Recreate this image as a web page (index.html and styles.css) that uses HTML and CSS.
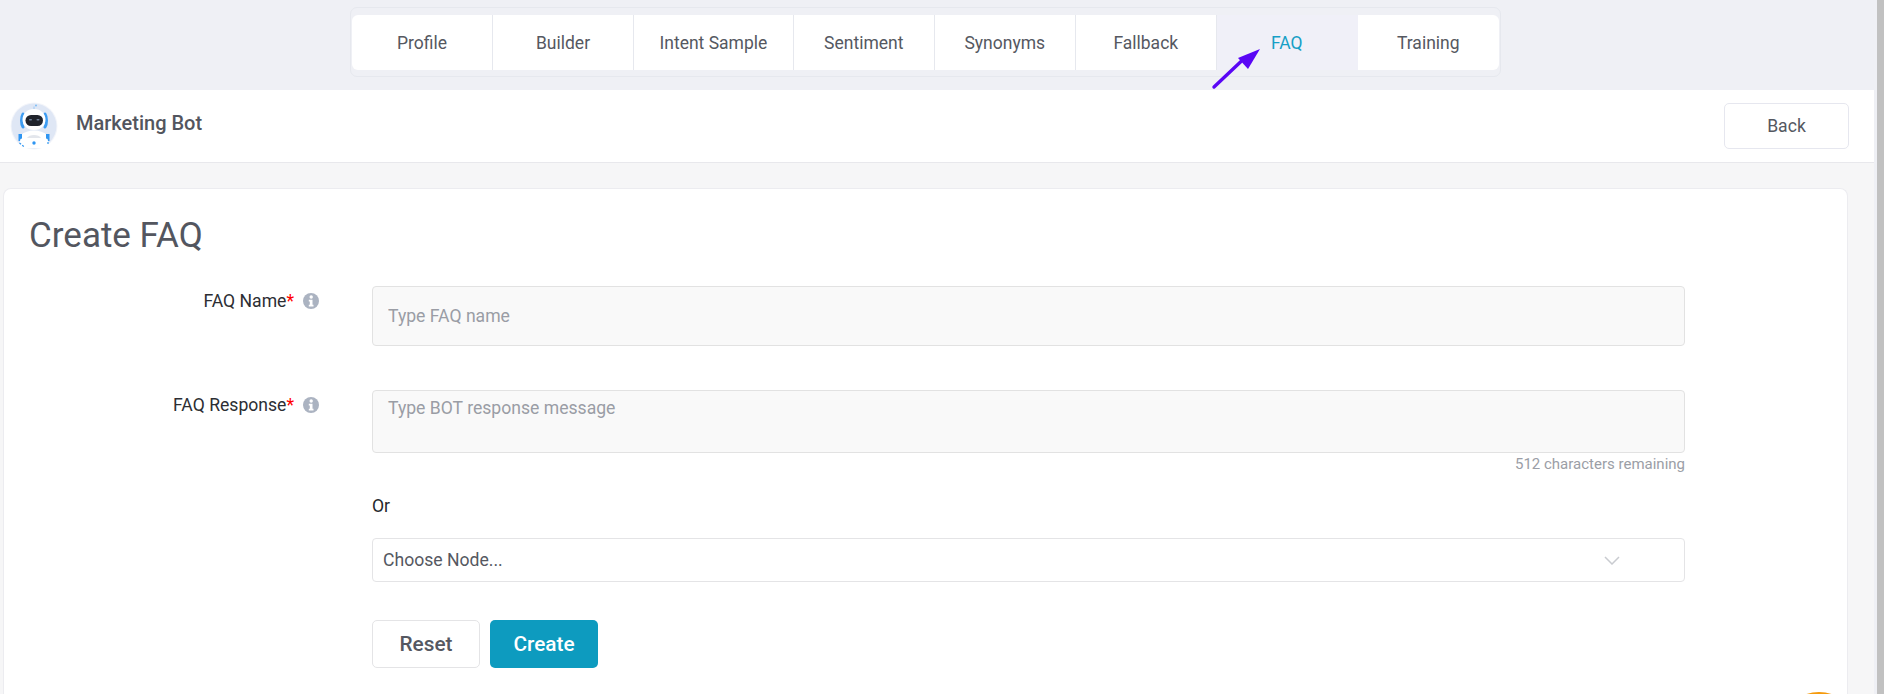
FILE: index.html
```html
<!DOCTYPE html>
<html lang="en">
<head>
<meta charset="utf-8">
<title>Create FAQ</title>
<link rel="stylesheet" href="styles.css">
</head>
<body>
<div class="app">
  <div class="topbar">
    <nav class="tabs">
      <a class="tab">Profile</a>
      <a class="tab">Builder</a>
      <a class="tab">Intent Sample</a>
      <a class="tab">Sentiment</a>
      <a class="tab">Synonyms</a>
      <a class="tab">Fallback</a>
      <a class="tab tab-active">FAQ</a>
      <a class="tab tab-last">Training</a>
    </nav>
  </div>
  <header class="bot-header">
    <div class="bot-id">
      <svg class="bot-logo" viewBox="0 0 48 48" aria-hidden="true">
        <circle cx="24" cy="24" r="23.500" fill="#f3f5fa"/>
        <circle cx="24" cy="24" r="22.500" fill="#dfe7f5"/>
        <circle cx="26" cy="3.500" r="1" fill="#7fbdf5"/>
        <path d="M24 4.500v4" stroke="#9cc9f5" stroke-width="1"/>
        <path d="M13 12c-2 3-2 10 0 13M35 12c2 3 2 10 0 13" fill="none" stroke="#3d9cf2" stroke-width="3" stroke-linecap="round"/>
        <path d="M24 7c7 0 11.500 5 11.500 10.500S31 28 24 28s-11.500-5-11.500-10.500S17 7 24 7z" fill="#fff"/>
        <rect x="15.500" y="13" width="17.500" height="11" rx="5.500" fill="#20232c"/>
        <rect x="19" y="17" width="3" height="1.500" rx=".7" fill="#6d7d94"/>
        <rect x="26.500" y="17" width="3" height="1.500" rx=".7" fill="#6d7d94"/>
        <path d="M11 33c3-3 8-4.500 13-4.500S34 30 37 33v8H11z" fill="#fff"/>
        <path d="M8.500 32h3.500v7H8.500zM36 32h3.500v7H36z" fill="#2e95f2"/>
        <path d="M17 36c2-4 12-4 14 0z" fill="#e3e6ec"/>
        <rect x="10" y="36.500" width="28" height="9.500" rx="2" fill="#fff"/>
        <circle cx="24" cy="41" r="1.700" fill="#2e95f2"/>
        <path d="M9.500 41l5 4" stroke="#2e95f2" stroke-width="1.200" stroke-dasharray="2 1.500"/>
        <circle cx="38" cy="41" r="1" fill="#5aaef5"/>
      </svg>
      <span class="bot-name">Marketing Bot</span>
    </div>
    <button class="btn btn-back" type="button">Back</button>
  </header>
  <main class="content">
    <section class="card">
      <h1 class="card-title">Create FAQ</h1>
      <form class="form">
        <div class="row row-name">
          <div class="label-wrap">
            <label class="label" for="faq-name">FAQ Name<span class="req">*</span></label>
            <svg class="info" viewBox="0 0 16 16" aria-hidden="true">
              <circle cx="8" cy="8" r="8" fill="#abb3c1"/>
              <circle cx="8.200" cy="4" r="1.700" fill="#fff"/>
              <path d="M5.800 6.800h3.700v5h1v1.700H5.800v-1.700h1v-3.300h-1z" fill="#fff"/>
            </svg>
          </div>
          <input class="field" id="faq-name" type="text" placeholder="Type FAQ name">
        </div>
        <div class="row">
          <div class="label-wrap">
            <label class="label" for="faq-resp">FAQ Response<span class="req">*</span></label>
            <svg class="info" viewBox="0 0 16 16" aria-hidden="true">
              <circle cx="8" cy="8" r="8" fill="#abb3c1"/>
              <circle cx="8.200" cy="4" r="1.700" fill="#fff"/>
              <path d="M5.800 6.800h3.700v5h1v1.700H5.800v-1.700h1v-3.300h-1z" fill="#fff"/>
            </svg>
          </div>
          <div class="stack">
            <textarea class="field field-area" id="faq-resp" placeholder="Type BOT response message"></textarea>
            <div class="counter">512 characters remaining</div>
            <div class="or">Or</div>
            <div class="select">
              <span>Choose Node...</span>
              <svg class="chevron" viewBox="0 0 16 9" aria-hidden="true">
                <path d="M1 1l7 7 7-7" fill="none" stroke="#c9cbd0" stroke-width="1.500"/>
              </svg>
            </div>
            <div class="actions">
              <button class="btn btn-reset" type="button">Reset</button>
              <button class="btn btn-create" type="button">Create</button>
            </div>
          </div>
        </div>
      </form>
    </section>
  </main>
  <svg class="arrow" viewBox="0 0 60 50" aria-hidden="true">
    <path d="M4 47L31 21.500" stroke="#5a06f5" stroke-width="3.400" stroke-linecap="round" fill="none"/>
    <path d="M50 9L28 18 38 29z" fill="#5a06f5"/>
  </svg>
  <div class="fab"></div>
</div>
<div class="scrollbar"></div>
</body>
</html>
```
FILE: styles.css
```css
* { box-sizing: border-box; }
html, body { margin: 0; height: 694px; overflow: hidden; }
body {
  display: flex;
  font-family: Roboto, "Liberation Sans", sans-serif;
  color: #555861;
}
.app {
  position: relative;
  flex: 1;
  height: 694px;
  overflow: hidden;
  background: #eff0f5;
  display: flex;
  flex-direction: column;
}
.scrollbar { width: 7px; background: #c1c1c1; }

.topbar {
  height: 90px;
  flex: none;
  padding: 7px 0 0 350px;
}
.tabs {
  display: inline-flex;
  height: 70px;
  padding: 7px 1px 6px;
  border: 1px solid #e6e8ee;
  border-radius: 7px;
}
.tab {
  min-width: 141px;
  padding: 0 25.500px;
  display: flex;
  align-items: center;
  justify-content: center;
  background: #fff;
  border-right: 1px solid #e6e8ee;
  font-size: 17.500px;
  color: #555861;
}
.tab:first-child { border-radius: 6px 0 0 6px; }
.tab-active { background: #f0f0f8; color: #169fc6; border-right-color: #f0f0f8; }
.tab-last { border-right: 0; border-radius: 0 6px 6px 0; }

.bot-header {
  width: 1874px;
  height: 73px;
  flex: none;
  background: #fff;
  border-bottom: 1px solid #e8e8ec;
  display: flex;
  align-items: center;
  justify-content: space-between;
  padding: 0 25px 0 10px;
}
.bot-id { display: flex; align-items: center; gap: 18px; }
.bot-logo { width: 48px; height: 48px; flex: none; }
.bot-name { font-size: 20px; font-weight: 500; color: #52555e; position: relative; top: -3px; }

.btn {
  font-family: inherit;
  border-radius: 5px;
  cursor: pointer;
}
.btn-back {
  width: 125px;
  height: 46px;
  background: #fff;
  border: 1px solid #e6e7ef;
  font-size: 17.600px;
  color: #555861;
}

.content {
  width: 1874px;
  flex: 1;
  background: #f6f6f7;
  padding: 25px 26px 0 3px;
}
.card {
  height: 100%;
  background: #fff;
  border: 1px solid #ececf0;
  border-bottom: 0;
  border-radius: 8px 8px 0 0;
  padding: 27px 0 0 25px;
}
.card-title {
  margin: 0 0 30px;
  font-size: 35px;
  line-height: 40px;
  font-weight: 400;
  color: #53565f;
}
.row {
  display: grid;
  grid-template-columns: 290px 1313px;
  column-gap: 53px;
}
.row-name { margin-bottom: 44px; }
.label-wrap {
  display: flex;
  justify-content: flex-end;
  align-items: flex-start;
  gap: 9px;
  padding-top: 5px;
}
.label {
  font-size: 17.600px;
  line-height: 20px;
  color: #2c2e33;
}
.req { color: #f00; }
.info { width: 16px; height: 16px; margin-top: 2px; flex: none; }

.field {
  display: block;
  width: 100%;
  height: 60px;
  padding: 0 15px;
  background: #f9f9f9;
  border: 1px solid #e2e2e2;
  border-radius: 4px;
  font-family: inherit;
  font-size: 17.600px;
  color: #555861;
  outline: none;
}
.field::placeholder { color: #9a9da5; opacity: 1; }
.field-area {
  height: 63px;
  padding: 7px 15px;
  line-height: 20px;
  resize: none;
}
.counter {
  margin-top: 1px;
  font-size: 15px;
  line-height: 20px;
  text-align: right;
  color: #9b9ea6;
}
.or {
  margin-top: 22px;
  font-size: 17.600px;
  line-height: 20px;
  color: #25272b;
}
.select {
  margin-top: 22px;
  height: 44px;
  display: flex;
  align-items: center;
  justify-content: space-between;
  padding: 0 64px 0 10px;
  background: #fff;
  border: 1px solid #e4e4e6;
  border-radius: 4px;
  font-size: 17.600px;
  color: #555861;
}
.chevron { width: 16px; height: 9px; }
.actions {
  margin-top: 38px;
  display: flex;
  gap: 10px;
}
.btn-reset, .btn-create {
  width: 108px;
  height: 48px;
  font-size: 20.800px;
  font-weight: 500;
}
.btn-reset { background: #fff; border: 1px solid #e4e4e6; color: #555861; }
.btn-create { background: #0d9bbf; border: 0; color: #fff; }

/* annotation drawn over the tab bar */
.arrow {
  position: absolute;
  left: 1210px;
  top: 40px;
  width: 60px;
  height: 50px;
}
/* floating button cut off by the window bottom */
.fab {
  position: absolute;
  left: 1779px;
  top: 692px;
  width: 80px;
  height: 80px;
  border-radius: 50%;
  background: #f59a0c;
}
```
